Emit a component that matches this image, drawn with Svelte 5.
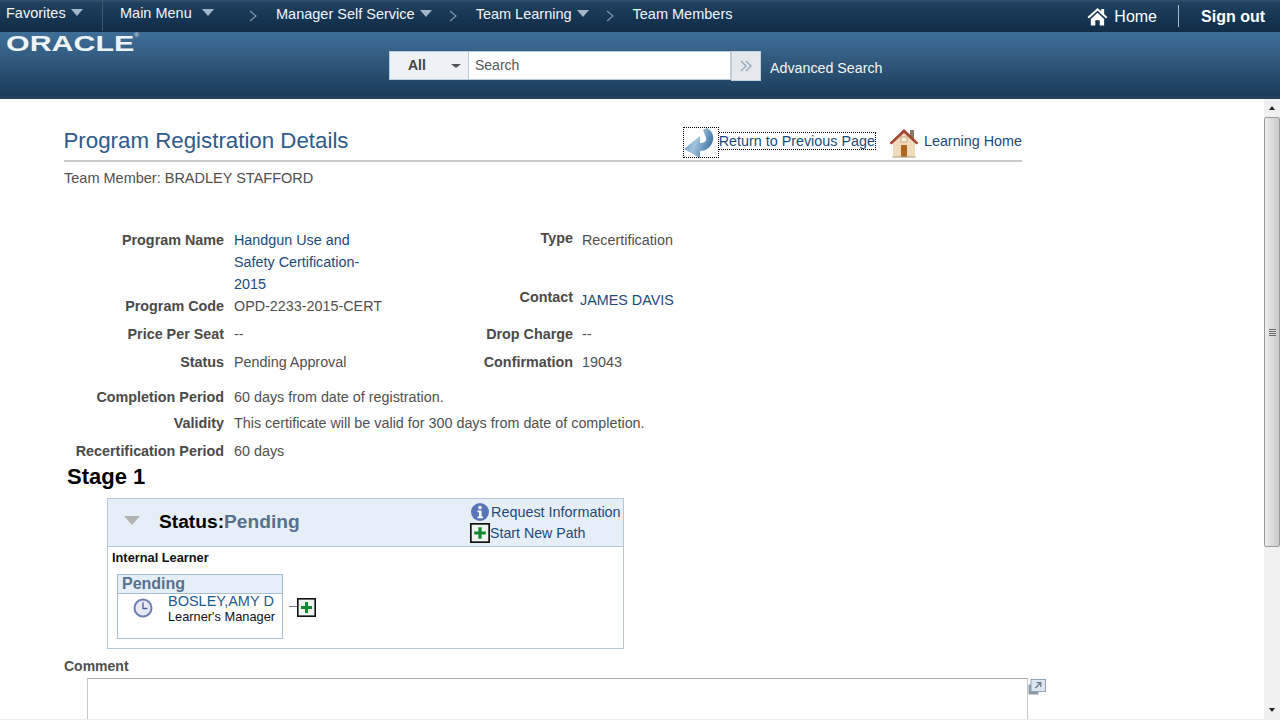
<script>
  const crumbs = [
    { label: "Manager Self Service", menu: true },
    { label: "Team Learning", menu: true },
    { label: "Team Members", menu: false },
  ];
</script>

{#snippet plus(cls)}
  <svg class={cls} viewBox="0 0 19 19" aria-hidden="true">
    <rect x="0.800" y="0.800" width="17.400" height="17.400" fill="#eef5ee" stroke="#111" stroke-width="1.600" />
    <path d="M8 4h3v4h4v3h-4v4H8v-4H4V8h4z" fill="#0f8a2e" />
  </svg>
{/snippet}

<div class="page">
  <header>
    <nav class="topbar">
      <div class="fav">
        <span>Favorites</span>
        <i class="tri"></i>
      </div>
      <div class="main-menu">
        <span>Main Menu</span>
        <i class="tri"></i>
      </div>
      {#each crumbs as c}
        <svg class="chev" viewBox="0 0 8 12"><path d="M1 1l6 5-6 5" fill="none" stroke="#8195a8" stroke-width="1.2" /></svg>
        <div class="crumb" class:last={!c.menu}>
          <span>{c.label}</span>
          {#if c.menu}<i class="tri"></i>{/if}
        </div>
      {/each}
      <div class="top-right">
        <svg class="home-ic" viewBox="0 0 22 20">
          <path d="M11 1L0.5 10.5 2 12l9-8 9 8 1.500-1.500-3.500-3.200V2h-3v2.600z" fill="#fff" />
          <path d="M4 12.500L11 6l7 6.500V19.500h-4.700V14H8.700v5.500H4z" fill="#fff" />
        </svg>
        <span class="home-t">Home</span>
        <span class="sep"></span>
        <span class="signout">Sign out</span>
      </div>
    </nav>
    <div class="searchbar">
      <div class="logo-wrap"><span class="logo">ORACLE</span></div>
      <div class="search">
        <div class="all"><b>All</b><i class="tri-dark"></i></div>
        <div class="input">Search</div>
        <div class="go">
          <svg viewBox="0 0 14 12"><path d="M2 1l5 5-5 5M7 1l5 5-5 5" fill="none" stroke="#8fa3b5" stroke-width="1.200" /></svg>
        </div>
        <span class="adv">Advanced Search</span>
      </div>
    </div>
  </header>

  <div class="body">
    <main>
      <div class="title-row">
        <h1>Program Registration Details</h1>
        <div class="title-links">
          <a class="return" href="#top">
            <span class="ret-ic">
              <svg viewBox="0 0 36 30">
                <defs>
                  <linearGradient id="ret" x1="0" y1="0.300" x2="1" y2="0.700">
                    <stop offset="0" stop-color="#5f90ba" />
                    <stop offset="0.400" stop-color="#a3c4de" />
                    <stop offset="1" stop-color="#2f6a9c" />
                  </linearGradient>
                </defs>
                <path d="M1 21L17 8v7c4 0 7-2 6-5-1-3-2-6-3-8l4-2c5 3 7 8 6 12-1 6-6 11-13 11v7z" fill="url(#ret)" />
              </svg>
            </span>
            <span class="ret-t">Return to Previous Page</span>
          </a>
          <a class="learn" href="#top">
            <svg class="house" viewBox="0 0 30 30">
              <rect x="21" y="2" width="4" height="9" fill="#8a7a68" />
              <path d="M4 14L15 5l11 9v15H4z" fill="#f0dcbd" />
              <path d="M0.500 15L15 1l14.500 14-2 1.500L15 5 2.500 16.500z" fill="#a5432f" />
              <rect x="12" y="17" width="6" height="12" fill="#b0651f" />
              <rect x="12" y="9" width="6" height="5" fill="#f6f0dc" stroke="#a08a60" stroke-width="0.600" />
              <path d="M3.500 29h23" stroke="#a99a80" />
            </svg>
            <span>Learning Home</span>
          </a>
        </div>
      </div>
      <p class="member">Team Member: BRADLEY STAFFORD</p>

      <div class="details">
        <span class="lbl">Program Name</span>
        <a class="val program" href="#top">Handgun Use and Safety Certification-2015</a>
        <span class="lbl up">Type</span>
        <span class="val right">Recertification</span>

        <span class="lbl">Program Code</span>
        <span class="val">OPD-2233-2015-CERT</span>
        <span class="lbl contact-l">Contact</span>
        <a class="val contact" href="#top">JAMES DAVIS</a>

        <span class="lbl">Price Per Seat</span>
        <span class="val">--</span>
        <span class="lbl">Drop Charge</span>
        <span class="val right">--</span>

        <span class="lbl">Status</span>
        <span class="val">Pending Approval</span>
        <span class="lbl">Confirmation</span>
        <span class="val right">19043</span>
      </div>

      <div class="details2">
        <span class="lbl">Completion Period</span>
        <span class="val">60 days from date of registration.</span>
        <span class="lbl">Validity</span>
        <span class="val">This certificate will be valid for 300 days from date of completion.</span>
        <span class="lbl">Recertification Period</span>
        <span class="val">60 days</span>
      </div>

      <h2>Stage 1</h2>

      <section class="stage">
        <div class="stage-head">
          <i class="tri-grey"></i>
          <div class="stage-status"><b>Status:</b><b class="pend">Pending</b></div>
          <div class="stage-actions">
            <a href="#top">
              <svg class="info" viewBox="0 0 18 18">
                <circle cx="9" cy="9" r="9" fill="#5a74b8" />
                <circle cx="9" cy="4.500" r="1.800" fill="#fff" />
                <path d="M6.500 7.500h4v6h1.500v1.800H6.500v-1.800H8V9.200H6.500z" fill="#fff" />
              </svg>Request Information
            </a>
            <a class="start" href="#top">{@render plus("plus-lg")}Start New Path</a>
          </div>
        </div>
        <div class="stage-body">
          <div class="learner">Internal Learner</div>
          <div class="approver-row">
            <div class="approver">
              <div class="approver-head">Pending</div>
              <div class="approver-body">
                <svg class="clock" viewBox="0 0 20 20">
                  <circle cx="10" cy="10" r="8.500" fill="#e6e8f5" stroke="#6f7fb5" stroke-width="2" />
                  <path d="M10 4.500V10.500H14.500" fill="none" stroke="#5566a0" stroke-width="1.400" />
                </svg>
                <div class="who">
                  <a href="#top">BOSLEY,AMY D</a>
                  <span>Learner's Manager</span>
                </div>
              </div>
            </div>
            <span class="dash"></span>
            {@render plus("plus-sm")}
          </div>
        </div>
      </section>

      <div class="comment-lbl">Comment</div>
      <div class="comment-row">
        <div class="comment"></div>
        <svg class="expand" viewBox="0 0 18 16">
          <rect x="0.500" y="5.500" width="10" height="10" fill="#8c99a6" />
          <rect x="3" y="0.500" width="14.500" height="12" fill="#dbe6f0" stroke="#8fa1b2" />
          <path d="M7.500 9l5-5M8.500 3.700h4.300V8" fill="none" stroke="#66788a" stroke-width="1.200" />
        </svg>
      </div>
    </main>

    <div class="scroll">
      <div class="sbtn"><i class="up-a"></i></div>
      <div class="thumb"><i class="grip"></i></div>
      <div class="track"></div>
      <div class="sbtn"><i class="dn-a"></i></div>
    </div>
  </div>
</div>

<style>
  :global(body) {
    margin: 0;
    background: #fff;
    font-family: "Liberation Sans", Arial, sans-serif;
    font-size: 14.350px;
    color: #505050;
  }

  a {
    color: #1d4a7c;
    text-decoration: none;
  }

  .page {
    width: 1280px;
    height: 720px;
    box-sizing: border-box;
    border-bottom: 1px solid #eee;
    overflow: hidden;
    display: flex;
    flex-direction: column;
  }

  /* header */
  header {
    height: 99px;
    flex: none;
  }

  .topbar {
    height: 32px;
    box-sizing: border-box;
    display: flex;
    align-items: flex-start;
    font-size: 14.500px;
    color: #f2f4f6;
    background: linear-gradient(#34506c 0, #1f405f 3px, #102c47 100%);
  }

  .fav {
    width: 103px;
    flex: none;
    box-sizing: border-box;
    padding: 5px 0 0 6px;
    height: 31px;
    border-right: 1px solid #3d5871;
    display: flex;
    gap: 5px;
  }

  .main-menu {
    display: flex;
    gap: 10px;
    padding: 5px 0 0 17px;
    width: 146px;
    box-sizing: border-box;
    flex: none;
  }

  .crumb {
    display: flex;
    gap: 5px;
    padding-top: 6px;
    margin-right: 17px;
  }

  .chev {
    width: 8px;
    height: 12px;
    margin: 10px 19px 0 0;
    flex: none;
  }

  .tri {
    width: 0;
    height: 0;
    margin-top: 4px;
    border-left: 6.500px solid transparent;
    border-right: 6.500px solid transparent;
    border-top: 7px solid #a3b7c9;
  }

  .top-right {
    margin-left: auto;
    display: flex;
    align-items: center;
    height: 32px;
    color: #fff;
  }

  .home-ic {
    width: 21px;
    height: 19px;
    margin-right: 6px;
  }

  .home-t {
    font-size: 16px;
    margin: 1px 21px 0 0;
  }

  .sep {
    width: 1px;
    height: 22px;
    background: #a9bccd;
    margin-right: 22px;
  }

  .signout {
    font-size: 16px;
    font-weight: bold;
    margin: 1px 15px 0 0;
  }

  .searchbar {
    height: 67px;
    box-sizing: border-box;
    background: linear-gradient(#3e6f98 0, #386389 25%, #1e4262 85%, #1a3a57 97%, #2c4a61 100%);
    display: flex;
    border-bottom: 1px solid #24404f;
  }

  .logo-wrap {
    width: 389px;
    flex: none;
    box-sizing: border-box;
    padding-left: 6px;
    overflow: visible;
  }

  .logo {
    position: relative;
    display: inline-block;
    margin-top: -1px;
    font-size: 20px;
    font-weight: bold;
    line-height: 22px;
    color: #eef3f7;
    transform-origin: 0 0;
    transform: scale(1.52, 1.12);
    white-space: nowrap;
  }

  .logo::after {
    content: "®";
    position: absolute;
    left: 100%;
    top: 2px;
    font-size: 4px;
    line-height: 4px;
    font-weight: normal;
  }

  .search {
    display: flex;
    align-items: flex-start;
    padding-top: 19px;
  }

  .all {
    width: 80px;
    height: 29px;
    box-sizing: border-box;
    background: #eef2f6;
    border: 1px solid #b9cad9;
    display: flex;
    align-items: center;
    padding-left: 18px;
    color: #444;
    font-size: 14px;
  }

  .all b {
    flex: 1;
    margin-top: -2px;
  }

  .tri-dark {
    width: 0;
    height: 0;
    margin-right: 7px;
    border-left: 5px solid transparent;
    border-right: 5px solid transparent;
    border-top: 4px solid #555;
  }

  .input {
    width: 262px;
    height: 29px;
    box-sizing: border-box;
    background: #fff;
    border: 1px solid #b9cad9;
    border-left: 0;
    padding: 5px 0 0 6px;
    color: #555;
    font-size: 14px;
  }

  .go {
    width: 30px;
    height: 30px;
    box-sizing: border-box;
    background: #e4e8ec;
    border: 1px solid #c4d0da;
    display: flex;
    align-items: center;
    justify-content: center;
  }

  .go svg {
    width: 14px;
    height: 12px;
  }

  .adv {
    color: #f2f4f6;
    margin: 9px 0 0 9px;
    font-size: 14.250px;
  }

  .body {
    flex: 1;
    min-height: 0;
    display: flex;
  }

  main {
    flex: 1;
    min-width: 0;
    padding-left: 64px;
    overflow: hidden;
  }

  .scroll {
    width: 16px;
    flex: none;
    background: #f0f0f0;
    display: flex;
    flex-direction: column;
  }

  .sbtn {
    height: 18px;
    flex: none;
    display: flex;
    align-items: center;
    justify-content: center;
    background: #f0f0f0;
  }

  .up-a,
  .dn-a {
    width: 0;
    height: 0;
    border-left: 3.500px solid transparent;
    border-right: 3.500px solid transparent;
  }

  .up-a {
    border-bottom: 4px solid #222;
  }

  .dn-a {
    border-top: 4px solid #222;
  }

  .thumb {
    height: 430px;
    flex: none;
    box-sizing: border-box;
    border: 1px solid #9a9a9a;
    border-radius: 2px;
    background: linear-gradient(90deg, #eee, #d9d9d9 55%, #c9c9c9);
    display: flex;
    align-items: center;
    justify-content: center;
  }

  .grip {
    width: 7px;
    height: 7px;
    background: repeating-linear-gradient(#666 0 1px, #e0e0e0 1px 2px);
  }

  .track {
    flex: 1;
  }

  /* title */
  .title-row {
    width: 958px;
    height: 63px;
    box-sizing: border-box;
    border-bottom: 2px solid #c9c9c9;
    display: flex;
    justify-content: space-between;
    align-items: flex-start;
  }

  h1 {
    margin: 28px 0 0 -0.500px;
    font-size: 22.300px;
    font-weight: normal;
    color: #2f5a8a;
    line-height: 27px;
  }

  .title-links {
    display: flex;
    padding-top: 28px;
  }

  .return {
    display: flex;
    align-items: flex-start;
    margin-right: 13px;
  }

  .ret-ic {
    width: 36px;
    height: 31px;
    box-sizing: border-box;
    border: 1px dotted #000;
    display: block;
    flex: none;
  }

  .ret-ic svg {
    width: 36px;
    height: 30px;
    margin: 0 0 0 -1px;
    display: block;
  }

  .ret-t {
    margin: 5px 0 0 0;
    height: 18px;
    box-sizing: border-box;
    line-height: 16px;
    border: 1px dotted #000;
    border-left: 0;
    white-space: nowrap;
  }

  .learn {
    display: flex;
    align-items: flex-start;
    gap: 5px;
    white-space: nowrap;
  }

  .learn span {
    margin-top: 6px;
  }

  .house {
    width: 30px;
    height: 30px;
    margin-top: 1px;
  }

  .member {
    margin: 8px 0 0;
    line-height: 16px;
    font-size: 14.500px;
  }

  /* detail rows */
  .details {
    display: grid;
    grid-template-columns: 160px 140px 189px auto;
    grid-template-rows: 66px 28px 28px 28px;
    column-gap: 10px;
    margin-top: 43px;
    width: 700px;
  }

  .details2 {
    display: grid;
    grid-template-columns: 160px auto;
    grid-template-rows: 26px 28px 27px;
    column-gap: 10px;
    margin-top: 7px;
    width: 700px;
  }

  .lbl {
    font-weight: bold;
    text-align: right;
    white-space: nowrap;
    line-height: 22px;
    color: #4a4a4a;
  }

  .val {
    line-height: 22px;
    white-space: nowrap;
  }

  .program {
    white-space: normal;
  }

  .right {
    margin-left: -1px;
  }

  .up {
    margin-top: -2px;
  }

  .contact-l {
    margin-top: -9px;
  }

  .contact {
    margin: -6px 0 0 -3px;
  }

  h2 {
    margin: -3px 0 0 3px;
    font-size: 22px;
    line-height: 26px;
    color: #000;
  }

  /* stage box */
  .stage {
    width: 517px;
    height: 151px;
    box-sizing: border-box;
    margin: 8px 0 0 43px;
    border: 1px solid #b5c8d8;
  }

  .stage-head {
    height: 48px;
    box-sizing: border-box;
    background: #e6eff7;
    border-bottom: 1px solid #b5c8d8;
    display: flex;
    align-items: flex-start;
  }

  .tri-grey {
    width: 0;
    height: 0;
    margin: 17px 0 0 16px;
    border-left: 8px solid transparent;
    border-right: 8px solid transparent;
    border-top: 9px solid #b2b2b2;
    flex: none;
  }

  .stage-status {
    font-size: 19.200px;
    line-height: 24px;
    margin: 11px 0 0 19px;
    color: #000;
  }

  .pend {
    color: #56708f;
  }

  .stage-actions {
    margin-left: auto;
    width: 153px;
    flex: none;
    white-space: nowrap;
    display: flex;
    flex-direction: column;
    padding-top: 2px;
  }

  .stage-actions a {
    display: flex;
    align-items: center;
    height: 21px;
    font-size: 14.400px;
  }

  .info {
    width: 18px;
    height: 18px;
    margin-left: 1px;
    margin-right: 2px;
  }

  .stage-actions .start {
    font-size: 14.200px;
  }

  :global(.plus-lg) {
    width: 20px;
    height: 20px;
  }

  .stage-body {
    padding: 3px 4px 0;
  }

  .learner {
    font-size: 12.800px;
    font-weight: bold;
    line-height: 16px;
    color: #111;
  }

  .approver-row {
    display: flex;
    align-items: center;
    margin: 8px 0 0 5px;
  }

  .approver {
    width: 166px;
    height: 65px;
    box-sizing: border-box;
    border: 1px solid #a7bdd0;
  }

  .approver-head {
    height: 19px;
    box-sizing: border-box;
    background: #e6eff7;
    border-bottom: 1px solid #a7bdd0;
    color: #56708f;
    font-size: 16px;
    font-weight: bold;
    line-height: 18px;
    padding-left: 4px;
  }

  .approver-body {
    display: flex;
    align-items: flex-start;
  }

  .clock {
    width: 20px;
    height: 20px;
    margin: 4px 0 0 15px;
    flex: none;
  }

  .who {
    margin-left: 15px;
    display: flex;
    flex-direction: column;
    white-space: nowrap;
    line-height: 15px;
    font-size: 14.500px;
  }

  .who a {
    color: #1f5a8c;
  }

  .who span {
    font-size: 12.800px;
    color: #111;
  }

  .dash {
    width: 8px;
    height: 1px;
    background: #777;
    margin: 0 0 1px 6px;
  }

  :global(.plus-sm) {
    width: 19px;
    height: 19px;
    margin-top: 1px;
  }

  /* comment */
  .comment-lbl {
    margin-top: 9px;
    font-weight: bold;
    line-height: 16px;
    font-size: 14px;
  }

  .comment-row {
    display: flex;
    align-items: flex-start;
    margin: 4px 0 0 23px;
  }

  .comment {
    width: 941px;
    height: 60px;
    box-sizing: border-box;
    border: 1px solid #c8c8c8;
    border-top-color: #a8a8a8;
  }

  .expand {
    width: 18px;
    height: 16px;
    margin-top: 1px;
  }
</style>
